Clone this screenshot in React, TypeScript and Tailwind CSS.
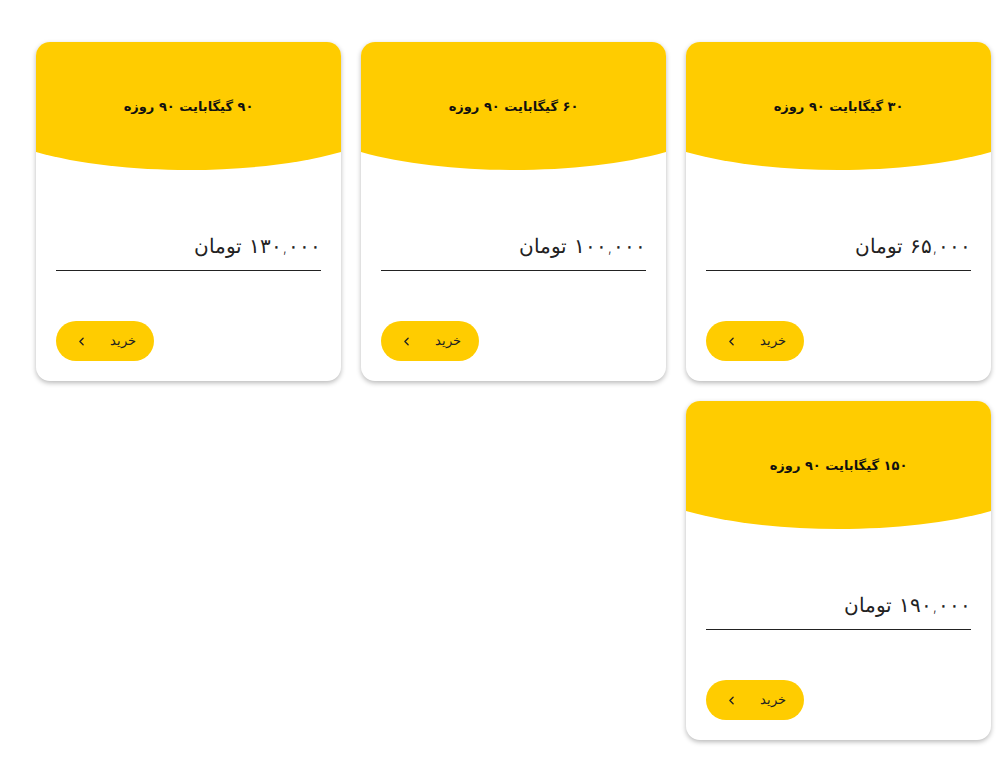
import { ChevronLeft } from "lucide-react";

const PLANS = [
  { title: "۳۰ گیگابایت ۹۰ روزه", price: "۶۵,۰۰۰ تومان" },
  { title: "۶۰ گیگابایت ۹۰ روزه", price: "۱۰۰,۰۰۰ تومان" },
  { title: "۹۰ گیگابایت ۹۰ روزه", price: "۱۳۰,۰۰۰ تومان" },
  { title: "۱۵۰ گیگابایت ۹۰ روزه", price: "۱۹۰,۰۰۰ تومان" },
];

function PlanCard({ title, price }: { title: string; price: string }) {
  return (
    <div className="bg-white rounded-[14px] overflow-hidden shadow-[0_2px_5px_rgba(0,0,0,0.28)] flex flex-col">
      {/* سربرگ زرد با لبه خمیده */}
      <div className="h-[110px] bg-[#ffcc00] flex items-center justify-center pt-[20px]">
        <h3 className="text-[13px] font-semibold text-[#111]">{title}</h3>
      </div>
      <svg className="block w-full h-[20px]" viewBox="0 0 305 20" preserveAspectRatio="none">
        <path d="M0 0 H305 V0 C220 24 85 24 0 0 Z" fill="#ffcc00" />
      </svg>

      <div className="px-5 pt-[60px] pb-[20px] flex flex-col">
        <div className="border-b border-[#222] pb-[10px] text-[20px] font-light text-[#222] leading-[28px]">
          {price}
        </div>
        <div className="mt-[50px] flex justify-end">
          <button className="h-[40px] w-[98px] rounded-full bg-[#ffcc00] flex items-center justify-center gap-[22px] text-[13px] font-light text-[#222]">
            <span>خرید</span>
            <ChevronLeft size={13} strokeWidth={2.5} />
          </button>
        </div>
      </div>
    </div>
  );
}

export default function App() {
  return (
    <div
      dir="rtl"
      className="min-h-screen bg-white pt-[42px] pr-[17px] pl-[36px] pb-8"
      style={{ fontFamily: '"DejaVu Sans", "Noto Sans", sans-serif' }}
    >
      <div className="grid grid-cols-3 gap-5">
        {PLANS.map((p) => (
          <PlanCard key={p.title} title={p.title} price={p.price} />
        ))}
      </div>
    </div>
  );
}
